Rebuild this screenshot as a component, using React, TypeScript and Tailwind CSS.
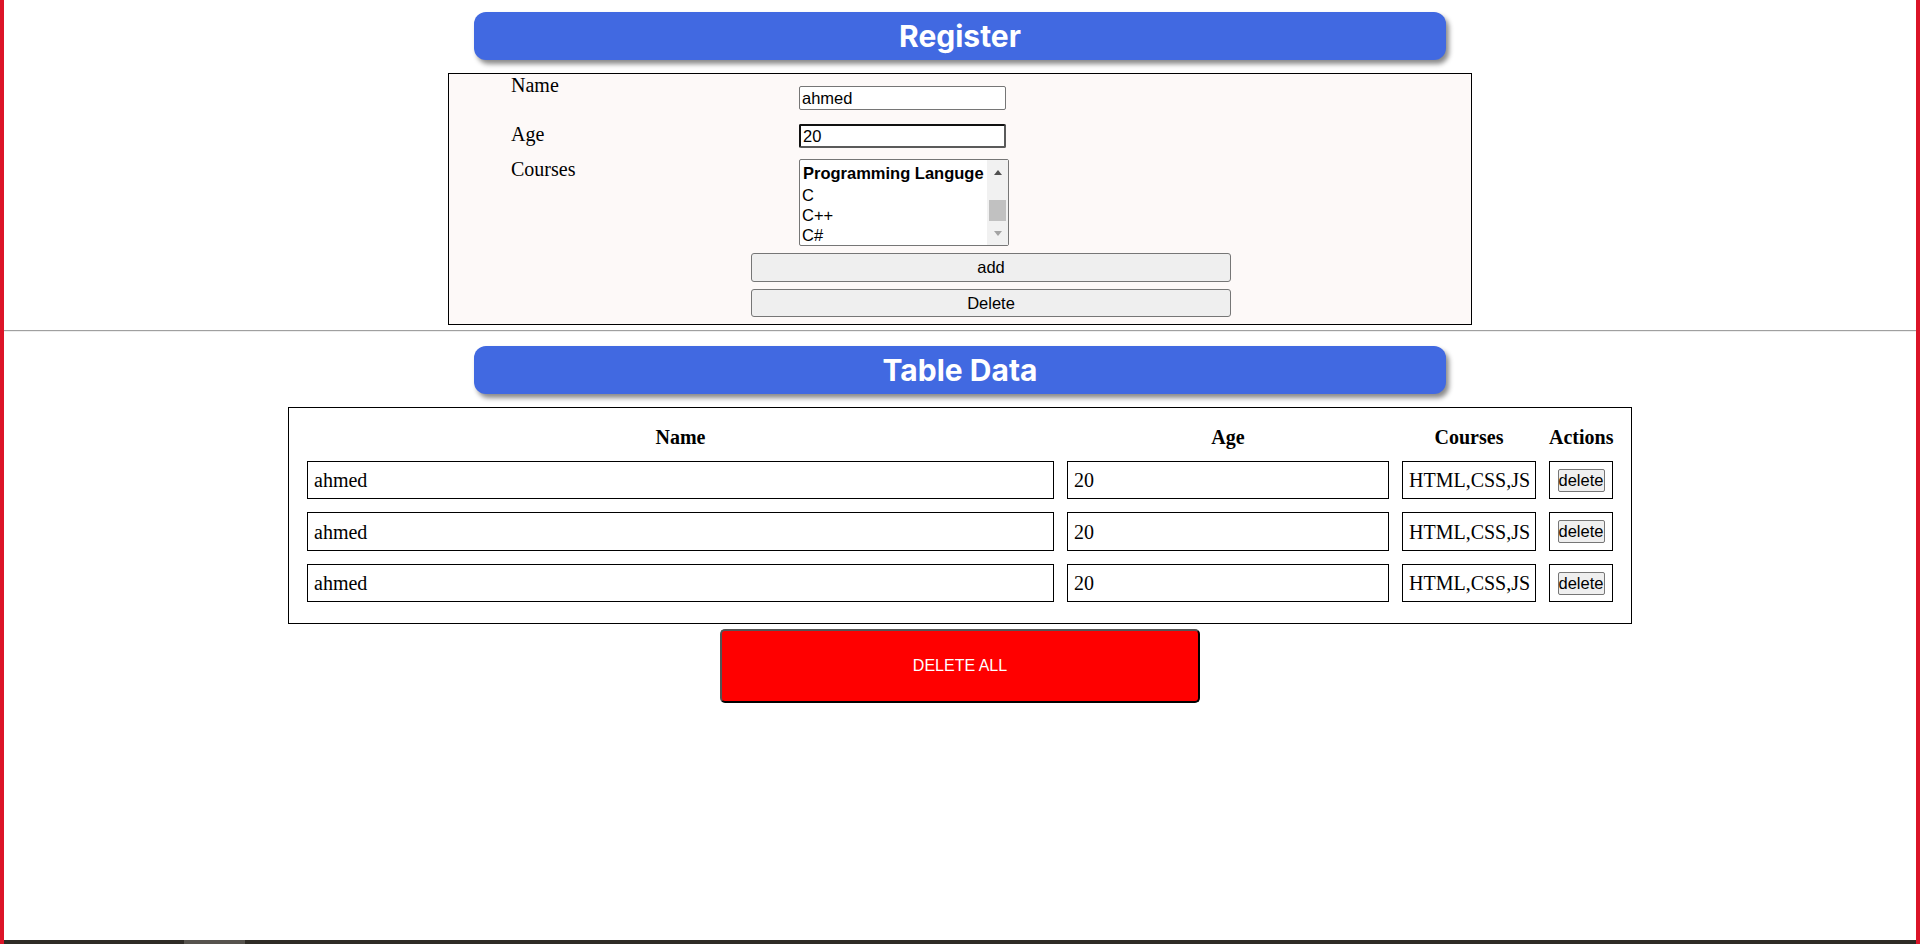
import { useState } from "react";

type Row = { name: string; age: string; courses: string };

const rows: Row[] = [
  { name: "ahmed", age: "20", courses: "HTML,CSS,JS" },
  { name: "ahmed", age: "20", courses: "HTML,CSS,JS" },
  { name: "ahmed", age: "20", courses: "HTML,CSS,JS" },
];

function Title({ text }: { text: string }) {
  return (
    <div className="mx-auto flex h-[48px] w-[972px] items-center justify-center rounded-xl bg-[#4169e1] shadow-[3px_4px_5px_#8a8a8a]">
      <h1 className="font-['Inter',sans-serif] text-[30px] font-bold leading-none text-white">{text}</h1>
    </div>
  );
}

function CourseList() {
  return (
    <div className="mt-[1px] flex h-[87px] w-[210px] rounded-[2px] border border-[#767676] bg-white font-['Liberation_Sans',Arial,sans-serif] text-[16.5px] text-black">
      <div className="flex-1 overflow-hidden">
        <div className="h-[25px] pt-[3px] pl-[3px] font-bold leading-[20px]">Programming Languge</div>
        <div className="h-[20px] pl-[2px] leading-[20px]">C</div>
        <div className="h-[20px] pl-[2px] leading-[20px]">C++</div>
        <div className="h-[20px] pl-[2px] leading-[20px]">C#</div>
      </div>
      <div className="flex w-[21px] flex-col bg-[#f1f1f1]">
        <div className="flex h-[24px] items-center justify-center">
          <svg width="8" height="5" viewBox="0 0 8 5"><path d="M4 0 L8 5 L0 5 Z" fill="#505050" /></svg>
        </div>
        <div className="flex flex-1 flex-col justify-end px-[2px]">
          <div className="h-[21px] bg-[#c1c1c1]" />
        </div>
        <div className="flex h-[24px] items-center justify-center">
          <svg width="8" height="5" viewBox="0 0 8 5"><path d="M0 0 L8 0 L4 5 Z" fill="#a3a3a3" /></svg>
        </div>
      </div>
    </div>
  );
}

function RegisterForm() {
  const [name, setName] = useState("ahmed");
  const [age, setAge] = useState("20");
  const label = "w-[288px] font-['Liberation_Serif',serif] text-[20px] leading-[23px] text-black";
  const input =
    "h-[24px] w-[207px] rounded-[2px] bg-white px-[2px] font-['Liberation_Sans',Arial,sans-serif] text-[16.5px] text-black outline-none";
  const btn =
    "ml-[302px] block w-[480px] rounded-[3px] border border-[#767676] bg-[#efefef] font-['Liberation_Sans',Arial,sans-serif] text-[16.5px] leading-none text-black";

  return (
    <div className="mx-auto mt-[13px] w-[1024px] border border-black bg-[#fdf9f8] pb-[7px]">
      <div className="flex h-[49px] items-start pl-[62px]">
        <span className={label}>Name</span>
        <input className={`${input} mt-[12px] border border-[#767676]`} value={name} onChange={(e) => setName(e.target.value)} />
      </div>
      <div className="flex h-[35px] items-start pl-[62px]">
        <span className={label}>Age</span>
        <input
          className={`${input} mt-[1px] border-2 border-t-[#111] border-l-[#111] border-r-[#5a5a5a] border-b-[#5a5a5a]`}
          value={age}
          onChange={(e) => setAge(e.target.value)}
        />
      </div>
      <div className="flex items-start pl-[62px]">
        <span className={label}>Courses</span>
        <CourseList />
      </div>
      <button className={`${btn} mt-[7px] h-[29px]`}>add</button>
      <button className={`${btn} mt-[7px] h-[28px]`}>Delete</button>
    </div>
  );
}

function DataTable() {
  const cell = "flex items-center border border-black px-[6px] text-[20px]";
  return (
    <div className="mx-auto mt-[13px] w-[1344px] border border-black bg-white px-[18px] pt-[18px] pb-[21px] font-['Liberation_Serif',serif] text-black">
      <div className="grid grid-cols-[747px_322px_134px_64px] gap-x-[13px] gap-y-[13px]">
        <div className="-mb-[1px] text-center text-[20px] font-bold leading-[23px]">Name</div>
        <div className="-mb-[1px] text-center text-[20px] font-bold leading-[23px]">Age</div>
        <div className="-mb-[1px] text-center text-[20px] font-bold leading-[23px]">Courses</div>
        <div className="-mb-[1px] text-center text-[20px] font-bold leading-[23px]">Actions</div>
        {rows.map((r, i) => {
          const h = i === 1 ? "h-[39px]" : "h-[38px]";
          return (
            <div key={i} className="contents">
              <div className={`${cell} ${h}`}>{r.name}</div>
              <div className={`${cell} ${h}`}>{r.age}</div>
              <div className={`${cell} ${h} px-[5px]`}>{r.courses}</div>
              <div className={`${cell} ${h} justify-center px-0`}>
                <button className="h-[23px] w-[47px] rounded-[2px] border border-[#767676] bg-[#efefef] font-['Liberation_Sans',Arial,sans-serif] text-[16.5px] leading-none text-black">
                  delete
                </button>
              </div>
            </div>
          );
        })}
      </div>
    </div>
  );
}

export default function App() {
  return (
    <div className="flex h-[944px] flex-col overflow-hidden border-x-4 border-[#dc1428] bg-white">
      <main className="flex-1 pt-[12px]">
        <Title text="Register" />
        <RegisterForm />
        <div className="mt-[5px] h-[2px] border-t border-[#a0a0a0] border-b border-b-[#eeeeee]" />
        <div className="mt-[14px]">
          <Title text="Table Data" />
        </div>
        <DataTable />
        <button className="mx-auto mt-[5px] block h-[74px] w-[480px] rounded-[5px] border-2 border-t-[#555] border-l-[#555] border-r-black border-b-black bg-[#ff0000] font-['Liberation_Sans',Arial,sans-serif] text-[16px] text-white">
          DELETE ALL
        </button>
      </main>
      <div className="flex h-[4px] bg-[#2e2b25]">
        <div className="ml-[180px] w-[61px] bg-[#56534d]" />
      </div>
    </div>
  );
}
